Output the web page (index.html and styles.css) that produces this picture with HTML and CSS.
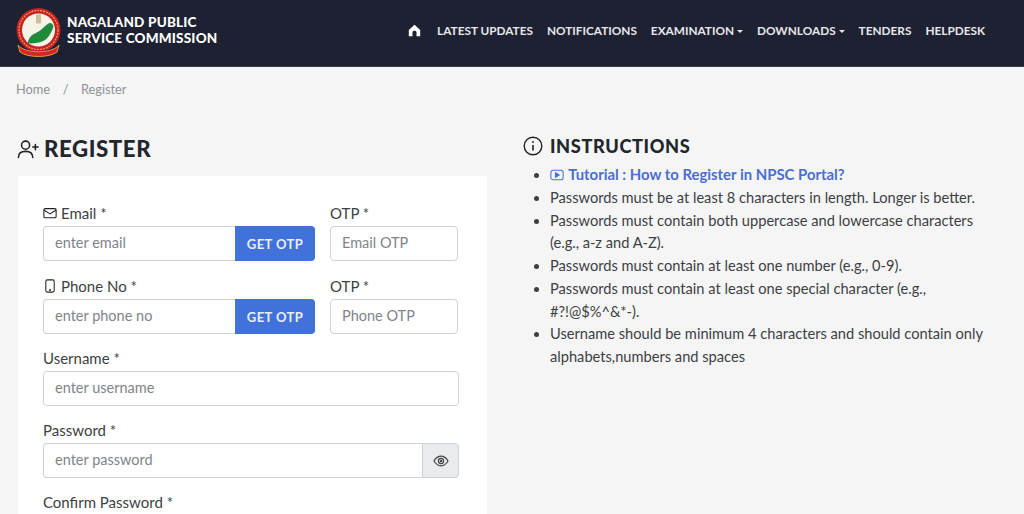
FILE: index.html
```html
<!DOCTYPE html>
<html lang="en">
<head>
<meta charset="utf-8">
<title>Register - NPSC</title>
<link rel="stylesheet" href="styles.css">
</head>
<body>
<header class="topbar">
  <a class="brand" href="#">
    <svg class="logo" viewBox="0 0 46 54" width="46" height="54">
      <circle cx="22.5" cy="24" r="22" fill="#c8202a"/>
      <circle cx="22.5" cy="24" r="19.5" fill="none" stroke="#e0a83a" stroke-width="1.2" stroke-dasharray="2 1"/>
      <circle cx="22.5" cy="24" r="16.5" fill="#f6f3e6"/>
      <path d="M12 37 C12 33 15 29 18 28 C21 26 24 25 27 22 C30 19 32 17 35 17 C37 18 38 20 37 22 C36 25 34 28 33 30 C31 33 28 35 25 36 C21 37 15 38 12 37 Z" fill="#1f8a3c"/>
      <rect x="20" y="8.5" width="5" height="9" fill="#c9bfa0"/>
      <path d="M2 39 C9 48 36 48 43 39 L41 46 C33 52 12 52 4 46 Z" fill="#d8232a" stroke="#e0a83a" stroke-width=".9"/>
    </svg>
    <span class="brand-text">NAGALAND PUBLIC<br>SERVICE COMMISSION</span>
  </a>
  <nav class="nav">
    <a class="nav-home" href="#" aria-label="Home">
      <svg viewBox="0 0 16 16" width="13" height="13"><path fill="#fff" d="M8 1 L1 7.5 V15 H5.5 V10.5 C5.5 9 6.6 8.2 8 8.2 C9.4 8.2 10.5 9 10.5 10.5 V15 H15 V7.5 Z"/></svg>
    </a>
    <a href="#">LATEST UPDATES</a>
    <a href="#">NOTIFICATIONS</a>
    <a href="#" class="caret">EXAMINATION</a>
    <a href="#" class="caret">DOWNLOADS</a>
    <a href="#">TENDERS</a>
    <a href="#">HELPDESK</a>
  </nav>
</header>

<div class="crumbs">
  <span>Home</span><span class="sep">/</span><span>Register</span>
</div>

<main class="columns">
  <section class="left">
    <h1 class="title">
      <svg viewBox="0 0 24 24" width="23" height="23" fill="none" stroke="#222" stroke-width="1.6" stroke-linecap="round"><circle cx="10" cy="8.5" r="4.2"/><path d="M2.5 21.5 C2.5 16.5 6 15 10 15 C14 15 17.5 16.5 17.5 21.5"/><path d="M17.5 10.5 H23 M20.2 7.8 V13.2"/></svg>
      REGISTER
    </h1>
    <form class="card">
      <div class="row first">
        <div class="field">
          <label class="label"><svg viewBox="0 0 16 16" width="14" height="14" fill="none" stroke="#222" stroke-width="1.2"><rect x="1" y="3" width="14" height="10.5" rx="1.5"/><path d="M1 4.5 L8 9 L15 4.5"/></svg> Email *</label>
          <div class="group"><input class="input" placeholder="enter email"><button type="button" class="btn">GET OTP</button></div>
        </div>
        <div class="field otp">
          <label class="label">OTP *</label>
          <input class="input solo" placeholder="Email OTP">
        </div>
      </div>
      <div class="row">
        <div class="field">
          <label class="label"><svg viewBox="0 0 16 16" width="14" height="14" fill="none" stroke="#222" stroke-width="1.2"><rect x="3.2" y="1" width="9.6" height="14" rx="1.8"/><circle cx="8" cy="12.6" r=".5" fill="#222"/></svg> Phone No *</label>
          <div class="group"><input class="input" placeholder="enter phone no"><button type="button" class="btn">GET OTP</button></div>
        </div>
        <div class="field otp">
          <label class="label">OTP *</label>
          <input class="input solo" placeholder="Phone OTP">
        </div>
      </div>
      <div class="field wide">
        <label class="label">Username *</label>
        <input class="input solo" placeholder="enter username">
      </div>
      <div class="field wide">
        <label class="label">Password *</label>
        <div class="group"><input class="input" placeholder="enter password"><span class="eye"><svg viewBox="0 0 16 16" width="16" height="16" fill="none" stroke="#444" stroke-width="1.2"><path d="M1 8 C3 4.6 5.4 3.2 8 3.2 C10.6 3.2 13 4.6 15 8 C13 11.4 10.6 12.8 8 12.8 C5.4 12.8 3 11.4 1 8 Z"/><circle cx="8" cy="8" r="2.6"/><circle cx="8" cy="8" r=".7" fill="#444"/></svg></span></div>
      </div>
      <div class="field wide">
        <label class="label">Confirm Password *</label>
        <div class="group"><input class="input" placeholder="confirm password"></div>
      </div>
    </form>
  </section>

  <aside class="right">
    <h2 class="title small">
      <svg viewBox="0 0 20 20" width="20" height="20" fill="none" stroke="#222" stroke-width="1.4"><circle cx="10" cy="10" r="8.8"/><path d="M10 9 V14.5" stroke-width="1.6"/><circle cx="10" cy="6" r=".9" fill="#222" stroke="none"/></svg>
      INSTRUCTIONS
    </h2>
    <ul class="rules">
      <li><a class="tutorial" href="#"><svg viewBox="0 0 16 16" width="14" height="14" fill="none" stroke="#4a6fd0" stroke-width="1.2"><rect x="1" y="2.5" width="14" height="11" rx="2.5"/><path d="M6.3 5.3 L10.6 8 L6.3 10.7 Z" fill="#4a6fd0"/></svg> Tutorial : How to Register in NPSC Portal?</a></li>
      <li>Passwords must be at least 8 characters in length. Longer is better.</li>
      <li>Passwords must contain both uppercase and lowercase characters (e.g., a-z and A-Z).</li>
      <li>Passwords must contain at least one number (e.g., 0-9).</li>
      <li>Passwords must contain at least one special character (e.g., #?!@$%^&amp;*-).</li>
      <li>Username should be minimum 4 characters and should contain only alphabets,numbers and spaces</li>
    </ul>
  </aside>
</main>
</body>
</html>
```

FILE: styles.css
```css
* { box-sizing: border-box; }
html, body { margin: 0; height: 514px; overflow: hidden; }
body {
  background: #f5f5f6;
  color: #3c3f44;
  font-family: "Lato", "Open Sans", sans-serif;
  font-size: 14.7px;
}
a { text-decoration: none; color: inherit; }

.topbar {
  height: 67px;
  background: #1e2131;
  border-bottom: 1px solid #3a3d4c;
  display: flex;
  align-items: center;
  justify-content: space-between;
  padding: 0 39px 5px 16px;
}
.brand { display: flex; align-items: center; gap: 5px; color: #fff; }
.logo { display: block; margin-top: 5px; }
.brand-text {
  font-family: "Lato", sans-serif;
  font-weight: 900;
  font-size: 13.5px;
  line-height: 16px;
  letter-spacing: .2px;
  margin-top: -1px;
}
.nav { display: flex; align-items: center; gap: 14px; color: #e6e8ee; font-size: 11.8px; font-weight: 700; letter-spacing: 0; }
.nav-home { display: flex; margin-right: 2px; }
.caret::after {
  content: "";
  display: inline-block;
  margin-left: 3px;
  vertical-align: 2px;
  border-left: 3px solid transparent;
  border-right: 3px solid transparent;
  border-top: 3px solid #e6e8ee;
}

.crumbs { display: flex; gap: 11.5px; padding: 14px 16px 0; height: 62px; color: #8f9296; font-size: 12.8px; }
.sep { padding: 0 1px; }

.columns { display: grid; grid-template-columns: 469px 1fr; gap: 36px; padding: 0 18px; }
.title {
  margin: 0 0 9px -2px;
  display: flex;
  align-items: center;
  gap: 5px;
  color: #23262b;
  font-size: 22.2px;
  font-weight: 900;
  letter-spacing: .6px;
  height: 38px;
}
.title.small { font-size: 18.2px; gap: 7px; height: 34px; margin: 0; }

.card {
  background: #fff;
  padding: 26px 28px 40px 25px;
}
.row { display: grid; grid-template-columns: 272px 128px; gap: 15px; }
.row.first { margin-bottom: 1px; }
.field { display: flex; flex-direction: column; margin-bottom: 13px; }
.label { display: flex; align-items: center; gap: 4px; height: 22px; margin-bottom: 2px; color: #3c3f44; font-size: 15px; }
.group { display: flex; height: 35px; }
.input {
  flex: 1;
  min-width: 0;
  height: 35px;
  padding: 0 11px 2px;
  font: inherit;
  font-size: 14.5px;
  background: #fff;
  border: 1px solid #cfd2d6;
  border-right: 0;
  border-radius: 4px 0 0 4px;
  color: #3c3f44;
}
.input.solo { flex: none; width: 100%; border-right: 1px solid #cfd2d6; border-radius: 4px; }
.group .input:last-child { border-right: 1px solid #cfd2d6; border-radius: 4px; }
.input::placeholder { color: #80848a; opacity: 1; }
.btn {
  width: 80px;
  border: 0;
  background: #4172d9;
  color: #e9eefb;
  font: inherit;
  font-size: 13px;
  font-weight: 700;
  letter-spacing: .4px;
  border-radius: 0 4px 4px 0;
}
.eye {
  width: 37px;
  display: flex;
  align-items: center;
  justify-content: center;
  background: #e9ebee;
  border: 1px solid #cfd2d6;
  border-radius: 0 4px 4px 0;
}

.rules { margin: 0; padding: 0 12px 0 27px; font-size: 14.65px; line-height: 22.75px; }
.tutorial { color: #4a6fd0; font-weight: 700; font-size: 14.9px; }
.tutorial svg { vertical-align: -2px; margin-right: 1px; }
```
